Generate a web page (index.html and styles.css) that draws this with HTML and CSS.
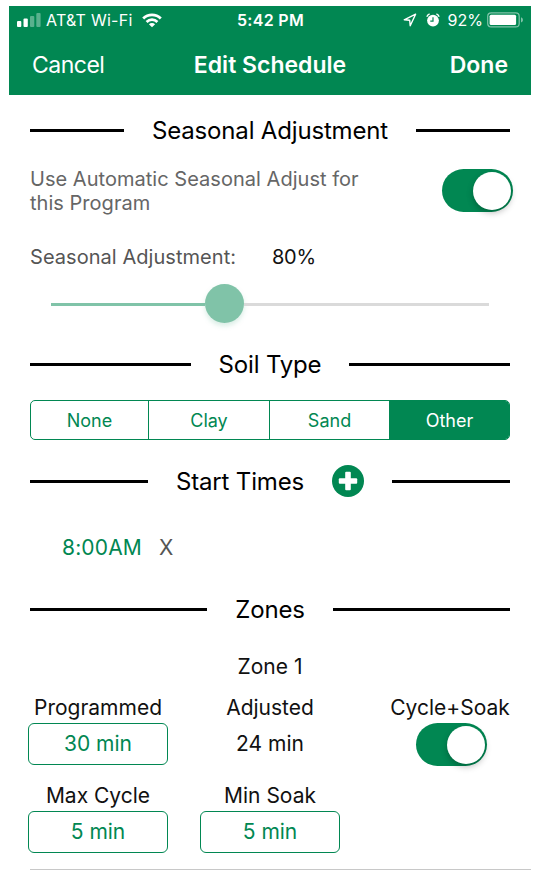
FILE: index.html
```
<!DOCTYPE html>
<html lang="en">
<head>
	<meta charset="UTF-8">
	<meta name="viewport" content="width=device-width, initial-scale=1.0">
	<title>Edit Schedule</title>
	<link rel="stylesheet" href="styles.css">
</head>
<body>
	<div class="screen">
		<header>
			<div class="status">
				<div class="carrier">
					<svg width="24" height="15" viewBox="0 0 24 15" fill="#fff">
						<rect x="0" y="8" width="4.3" height="6" rx="1"/>
						<rect x="6.5" y="5.5" width="4.3" height="8.5" rx="1"/>
						<rect x="13" y="3" width="4.3" height="11" rx="1" opacity=".35"/>
						<rect x="19.3" y="0" width="4.3" height="14" rx="1" opacity=".35"/>
					</svg>
					<span class="network">AT&amp;T Wi-Fi</span>
					<svg class="wifi" width="20" height="15" viewBox="0 0 20 15" fill="none" stroke="#fff" stroke-width="2.8">
						<path d="M1.2 5.4a12.5 12.5 0 0 1 17.6 0"/>
						<path d="M4.6 8.9a7.700 7.700 0 0 1 10.800 0"/>
						<path d="M10 14.300l-3.100-3.100a4.400 4.400 0 0 1 6.200 0z" fill="#fff" stroke="none"/>
					</svg>
				</div>
				<span class="clock">5:42 PM</span>
				<div class="battery">
					<svg class="arrow" width="14" height="14" viewBox="0 0 14 14" fill="none" stroke="#fff" stroke-width="1.4" stroke-linejoin="round">
						<path d="M12.600 1.200L1.200 6.800l5.500.5.500 5.500z"/>
					</svg>
					<svg class="alarm" width="14" height="14" viewBox="0 0 14 14">
						<circle cx="7" cy="7.6" r="5.9" fill="#fff"/>
						<path d="M.8 3.800A5 5 0 0 1 3.600.8M13.200 3.800A5 5 0 0 0 10.400.8" fill="none" stroke="#fff" stroke-width="1.3"/>
						<path d="M7 4.200v3.900H4.300" fill="none" stroke="#018752" stroke-width="1.2"/>
					</svg>
					<span class="percent">92%</span>
					<svg width="37" height="16" viewBox="0 0 37 16">
						<rect x=".7" y=".9" width="31.5" height="14" rx="3.5" fill="none" stroke="#fff" stroke-width="1.2" opacity=".5"/>
						<rect x="2.6" y="2.7" width="26.5" height="10.4" rx="1.5" fill="#fff"/>
						<path d="M34 5.300q2 .7 2 2.600t-2 2.600z" fill="#fff" opacity=".5"/>
					</svg>
				</div>
			</div>
			<nav>
				<span class="cancel">Cancel</span>
				<span class="title">Edit Schedule</span>
				<span class="done">Done</span>
			</nav>
		</header>

		<main>
			<h2 class="seasonal">Seasonal Adjustment</h2>
			<div class="auto">
				<p>Use Automatic Seasonal Adjust for this Program</p>
				<div class="toggle"></div>
			</div>
			<div class="adjust">
				<span class="label">Seasonal Adjustment:</span>
				<span class="value">80%</span>
			</div>
			<div class="slider">
				<div class="fill"></div>
				<div class="thumb"></div>
				<div class="rest"></div>
			</div>

			<h2 class="soil">Soil Type</h2>
			<div class="segments">
				<div>None</div>
				<div>Clay</div>
				<div>Sand</div>
				<div class="active">Other</div>
			</div>

			<h2 class="start">Start Times
				<svg width="32" height="32" viewBox="0 0 32 32">
					<circle cx="16" cy="16" r="16" fill="#018752"/>
					<g fill="#fff">
						<rect x="13.2" y="6.8" width="5.6" height="18.4" rx="1"/>
						<rect x="6.8" y="13.2" width="18.4" height="5.6" rx="1"/>
					</g>
				</svg>
			</h2>
			<div class="time">
				<span class="hour">8:00AM</span>
				<span class="remove">X</span>
			</div>

			<h2 class="zones">Zones</h2>
			<h3>Zone 1</h3>
			<div class="zone">
				<div class="field">
					<span class="programmed">Programmed</span>
					<div class="box">30 min</div>
				</div>
				<div class="field">
					<span class="adjusted">Adjusted</span>
					<div class="plain">24 min</div>
				</div>
				<div class="field">
					<span class="cycle">Cycle+Soak</span>
					<div class="toggle"></div>
				</div>
				<div class="field">
					<span class="max">Max Cycle</span>
					<div class="box">5 min</div>
				</div>
				<div class="field">
					<span class="min">Min Soak</span>
					<div class="box">5 min</div>
				</div>
			</div>
		</main>
	</div>
</body>
</html>
```
FILE: styles.css
```
*{
	margin: 0;
	padding: 0;
	box-sizing: border-box;
}
body{
	background: #fff;
	font-family: Inter, "Liberation Sans", sans-serif;
	color: #111;
	font-size: 21px;
}
svg{
	display: block;
	flex: none;
}
span{
	white-space: nowrap;
}
.screen{
	width: 522px;
	margin: 6px 0 0 9px;
}
header{
	height: 89px;
	background: #018752;
	color: #fff;
}
.status{
	height: 28px;
	padding: 0 7px 0 8px;
	display: grid;
	grid-template-columns: 1fr auto 1fr;
	align-items: center;
	font-size: 16px;
}
.carrier,.battery{
	display: flex;
	align-items: center;
}
.battery{
	justify-content: flex-end;
}
.network{
	margin-left: 5px;
	letter-spacing: .25px;
}
.wifi{
	margin-left: 9px;
}
.clock{
	font-weight: 600;
	letter-spacing: .3px;
}
.alarm{
	margin-left: 9px;
}
.percent{
	margin: 0 4px 0 8px;
}
nav{
	height: 61px;
	padding: 0 23px;
	display: grid;
	grid-template-columns: 1fr auto 1fr;
	align-items: center;
	font-size: 23px;
}
.cancel{
	letter-spacing: -.5px;
}
.title,.done{
	font-weight: 600;
}
.done{
	text-align: right;
}
main{
	padding: 17px 21px 0;
}
h2{
	height: 36px;
	display: flex;
	align-items: center;
	gap: 28px;
	font-size: 24px;
	font-weight: 400;
	letter-spacing: -.17px;
	white-space: nowrap;
	color: #000;
}
h2:before,h2:after{
	content: "";
	flex: 1;
	height: 3px;
	background: #000;
}
.auto{
	height: 48px;
	margin-top: 19px;
	display: flex;
	justify-content: space-between;
	align-items: center;
}
.auto p{
	width: 350px;
	font-size: 20px;
	line-height: 24px;
	letter-spacing: .03px;
	color: #666;
}
.toggle{
	width: 71px;
	height: 43px;
	padding: 3px 2px;
	border-radius: 22px;
	background: #018752;
	display: flex;
	justify-content: flex-end;
}
.toggle:after{
	content: "";
	width: 38px;
	height: 38px;
	border-radius: 50%;
	background: #fff;
	box-shadow: 0 3px 6px rgba(0,0,0,.25);
}
.auto .toggle{
	margin: -2px -3px 0 0;
}
.adjust{
	height: 30px;
	margin-top: 27px;
	display: flex;
	align-items: center;
	font-size: 20px;
}
.label{
	width: 242px;
	letter-spacing: .05px;
	color: #555;
}
.value{
	letter-spacing: -.3px;
}
.slider{
	height: 40px;
	margin: 11px 21px 0;
	display: flex;
	align-items: center;
}
.fill{
	width: 154px;
	height: 3px;
	margin-top: 2px;
	background: #80c3a8;
}
.thumb{
	width: 39px;
	height: 39px;
	border-radius: 50%;
	background: #80c3a8;
	box-shadow: 0 3px 5px rgba(128,195,168,.3);
}
.rest{
	flex: 1;
	height: 3px;
	margin-top: 2px;
	background: #dadada;
}
.soil{
	margin-top: 23px;
}
.segments{
	height: 40px;
	margin-top: 18px;
	display: grid;
	grid-template-columns: 117px 121px 120px 1fr;
	border: 1px solid #018752;
	border-radius: 5px;
	overflow: hidden;
	font-size: 18px;
	color: #018752;
}
.segments div{
	display: flex;
	justify-content: center;
	align-items: center;
}
.segments div + div{
	border-left: 1px solid #018752;
}
.segments .active{
	background: #018752;
	color: #fff;
}
.start{
	margin-top: 23px;
}
.time{
	height: 30px;
	margin: 33px 0 0 32px;
	display: flex;
	align-items: center;
	gap: 17px;
}
.hour{
	color: #018752;
	letter-spacing: .15px;
}
.remove{
	color: #555;
}
.zones{
	margin-top: 29px;
}
h3{
	height: 30px;
	margin-top: 25px;
	font-size: 21px;
	line-height: 30px;
	font-weight: 400;
	text-align: center;
}
.zone{
	margin: 11px -21px 0 0;
	padding-bottom: 16px;
	display: grid;
	grid-template-columns: 140px 140px 156px;
	gap: 15px 32px;
	border-bottom: 1px solid #c8c8c8;
}
.field{
	margin: 0 2px 0 -2px;
	display: flex;
	flex-flow: column;
	align-items: center;
	gap: 1px;
	line-height: 29px;
}
.field .toggle{
	margin-left: 2px;
}
.box{
	width: 140px;
	height: 42px;
	border: 1px solid #018752;
	border-radius: 6px;
	line-height: 40px;
	text-align: center;
	color: #018752;
}
.plain{
	line-height: 42px;
}
```
